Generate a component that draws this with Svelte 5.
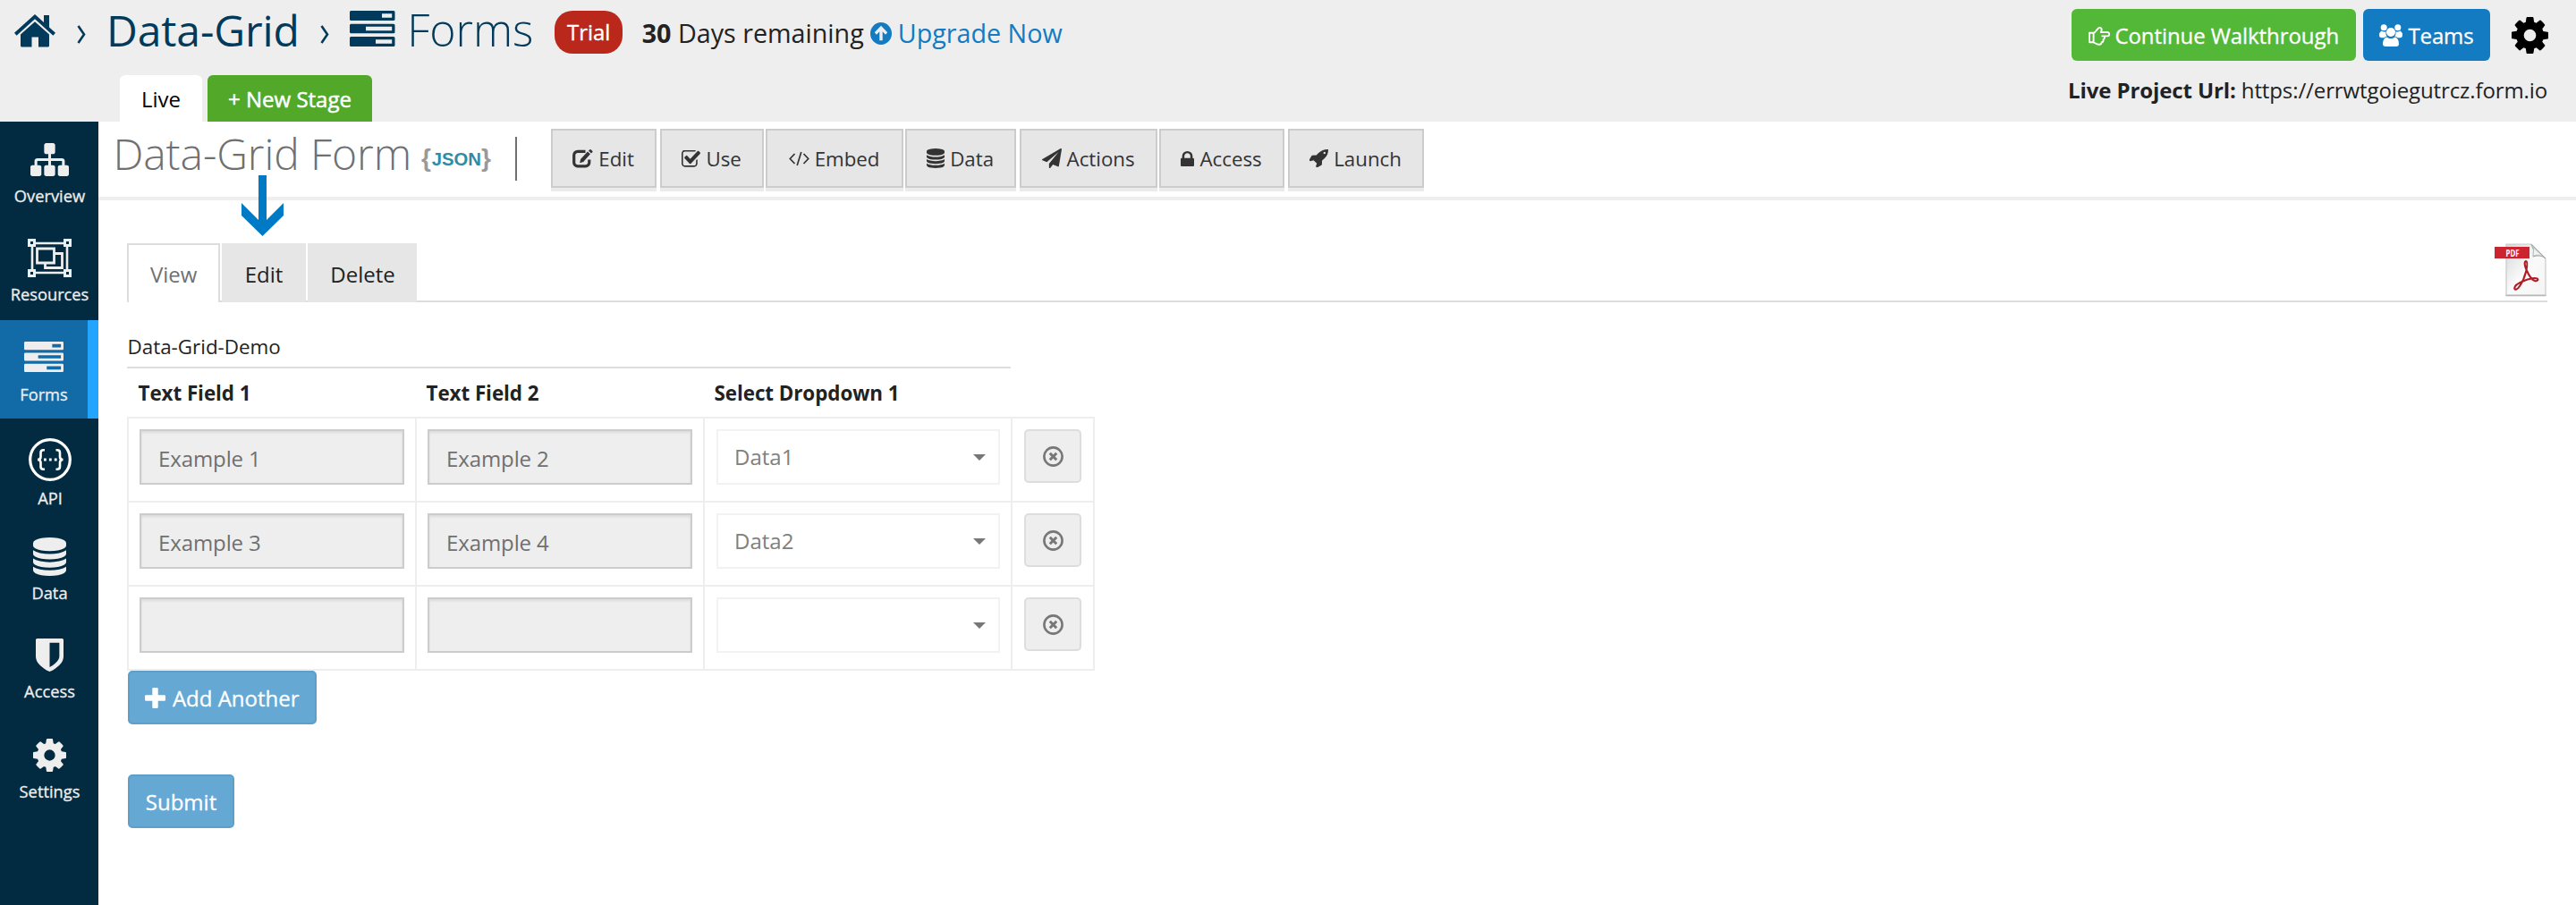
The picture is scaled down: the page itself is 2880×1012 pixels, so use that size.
<script>
  const nav = [
    { key: 'overview', label: 'Overview', icon: 'sitemap', w: 43, h: 37 },
    { key: 'resources', label: 'Resources', icon: 'group', w: 49, h: 43 },
    { key: 'forms', label: 'Forms', icon: 'forms', w: 44, h: 34, active: true },
    { key: 'api', label: 'API', icon: 'api', w: 48, h: 48 },
    { key: 'data', label: 'Data', icon: 'database', w: 37, h: 43 },
    { key: 'access', label: 'Access', icon: 'shield', w: 31, h: 37 },
    { key: 'settings', label: 'Settings', icon: 'cog', w: 37, h: 37 }
  ];

  const tools = [
    { key: 't118', label: 'Edit', icon: 'edit', w: 23, h: 21 },
    { key: 't116', label: 'Use', icon: 'check', w: 21, h: 19 },
    { key: 't154', label: 'Embed', icon: 'code', w: 23, h: 17 },
    { key: 't124', label: 'Data', icon: 'database', w: 20, h: 22 },
    { key: 't154', label: 'Actions', icon: 'plane', w: 22, h: 22 },
    { key: 't140', label: 'Access', icon: 'lock', w: 15, h: 17 },
    { key: 't152', label: 'Launch', icon: 'rocket', w: 21, h: 20 }
  ];
  const toolGap = ['g4', 'g0', 'g0', 'g4', 'g0', 'g4'];

  const rows = [
    { a: 'Example 1', b: 'Example 2', c: 'Data1' },
    { a: 'Example 3', b: 'Example 4', c: 'Data2' },
    { a: '', b: '', c: '' }
  ];
</script>

{#snippet icon(name, w, h)}
  {#if name === 'sitemap'}
    <svg width={w} height={h} viewBox="0 128 1792 1536" preserveAspectRatio="none"><path d="M1792 1248v320q0 40-28 68t-68 28h-320q-40 0-68-28t-28-68v-320q0-40 28-68t68-28h96v-192h-512v192h96q40 0 68 28t28 68v320q0 40-28 68t-68 28h-320q-40 0-68-28t-28-68v-320q0-40 28-68t68-28h96v-192h-512v192h96q40 0 68 28t28 68v320q0 40-28 68t-68 28h-320q-40 0-68-28t-28-68v-320q0-40 28-68t68-28h96v-192q0-52 38-90t90-38h512v-192h-96q-40 0-68-28t-28-68v-320q0-40 28-68t68-28h320q40 0 68 28t28 68v320q0 40-28 68t-68 28h-96v192h512q52 0 90 38t38 90v192h96q40 0 68 28t28 68z" /></svg>
  {:else if name === 'group'}
    <svg width={w} height={h} viewBox="0 0 49 43" class="line">
      <path d="M9 5H40M9 38H40M5 9V34M44 9V34" stroke-width="2.6" />
      <path d="M1.5 1.5h6v6h-6zM41.5 1.5h6v6h-6zM1.5 35.5h6v6h-6zM41.5 35.5h6v6h-6z" stroke-width="3" />
      <path d="M10.5 11h19v16h-19z" stroke-width="2.8" />
      <path d="M30 16.5h8.5V32.5H19.5V27.5" stroke-width="2.8" />
    </svg>
  {:else if name === 'forms'}
    <svg width={w} height={h} viewBox="0 0 50.5 40" preserveAspectRatio="none">
      <path fill-rule="evenodd" d="M1.5 0h47.5a1.5 1.5 0 0 1 1.5 1.5v8a1.5 1.5 0 0 1-1.5 1.5H1.5A1.5 1.5 0 0 1 0 9.5v-8A1.5 1.5 0 0 1 1.5 0zM36 3.2v4.5h11.2v-4.5zM1.5 14.7h47.5a1.5 1.5 0 0 1 1.5 1.5v7.5a1.5 1.5 0 0 1-1.5 1.5H1.5A1.5 1.5 0 0 1 0 23.7v-7.5a1.5 1.5 0 0 1 1.5-1.5zM18 17.8v4.4h29.2v-4.4zM1.5 29h47.5a1.5 1.5 0 0 1 1.5 1.5v8a1.5 1.5 0 0 1-1.5 1.5H1.5A1.5 1.5 0 0 1 0 38.5v-8A1.5 1.5 0 0 1 1.5 29zM29 32.3v4.4h18.2v-4.4z" />
    </svg>
  {:else if name === 'api'}
    <svg width={w} height={h} viewBox="0 0 48 48" class="line white">
      <circle cx="24" cy="24" r="22.3" stroke-width="3.2" />
      <path d="M18 13.2h-1.5c-2 0-3 1-3 3v4.5c0 2-1.3 3.3-3.5 3.3 2.2 0 3.5 1.3 3.5 3.3v4.5c0 2 1 3 3 3H18M30.5 13.2h1.5c2 0 3 1 3 3v4.5c0 2 1.3 3.3 3.5 3.3-2.2 0-3.5 1.3-3.5 3.3v4.5c0 2-1 3-3 3h-1.5" stroke-width="2.6" />
      <path d="M17 24h2.8M22.9 24h2.8M28.8 24h2.8" stroke-width="2.8" />
    </svg>
  {:else if name === 'database'}
    <svg width={w} height={h} viewBox="128 0 1536 1792" preserveAspectRatio="none"><path d="M896 768q237 0 443-43t325-127v170q0 69-103 128t-280 93.5-385 34.5-385-34.5-280-93.5-103-128v-170q119 84 325 127t443 43zm0 768q237 0 443-43t325-127v170q0 69-103 128t-280 93.5-385 34.5-385-34.5-280-93.5-103-128v-170q119 84 325 127t443 43zm0-384q237 0 443-43t325-127v170q0 69-103 128t-280 93.5-385 34.5-385-34.5-280-93.5-103-128v-170q119 84 325 127t443 43zm0-1152q208 0 385 34.5t280 93.5 103 128v128q0 69-103 128t-280 93.5-385 34.5-385-34.5-280-93.5-103-128v-128q0-69 103-128t280-93.5 385-34.5z" /></svg>
  {:else if name === 'shield'}
    <svg width={w} height={h} viewBox="256 128 1280 1536" preserveAspectRatio="none"><path d="M1344 960v-640h-448v1137q119-63 213-137 235-184 235-360zm192-768v768q0 86-33.5 170.5t-83 150-118 127.5-126.5 103-121 77.5-89.5 49.5-42.5 20q-12 6-26 6t-26-6q-16-7-42.5-20t-89.5-49.5-121-77.5-126.5-103-118-127.5-83-150-33.5-170.5v-768q0-26 19-45t45-19h1152q26 0 45 19t19 45z" /></svg>
  {:else if name === 'cog'}
    <svg width={w} height={h} viewBox="128 128 1536 1536" preserveAspectRatio="none"><path d="M1152 896q0-106-75-181t-181-75-181 75-75 181 75 181 181 75 181-75 75-181zm512-109v222q0 12-8 23t-20 13l-185 28q-19 54-39 91 35 50 107 138 10 12 10 25t-9 23q-27 37-99 108t-94 71q-12 0-26-9l-138-108q-44 23-91 38-16 136-29 186-7 28-36 28h-222q-14 0-24.5-8.5t-11.5-21.5l-28-184q-49-16-90-37l-141 107q-10 9-25 9-14 0-25-11-126-114-165-168-7-10-7-23 0-12 8-23 15-21 51-66.5t54-70.5q-27-50-41-99l-183-27q-13-2-21-12.5t-8-23.5v-222q0-12 8-23t19-13l186-28q14-46 39-92-40-57-107-138-10-12-10-24 0-10 9-23 26-36 98.5-107.5t94.5-71.5q13 0 26 10l138 107q44-23 91-38 16-136 29-186 7-28 36-28h222q14 0 24.5 8.5t11.5 21.5l28 184q49 16 90 37l142-107q9-9 24-9 13 0 25 10 129 119 165 170 7 8 7 22 0 12-8 23-15 21-51 66.5t-54 70.5q26 50 41 98l183 28q13 2 21 12.5t8 23.5z" /></svg>
  {:else if name === 'edit'}
    <svg width={w} height={h} viewBox="0 0 23 21">
      <path class="stroked" d="M14.500 2.300H6a4.200 4.200 0 0 0-4.300 4.200v8.200A4.200 4.200 0 0 0 6 18.900h8.500a4.200 4.200 0 0 0 4.300-4.200v-3.200" stroke-width="3.200" />
      <path d="M17 2.600l3 2.700-7.800 8.600-4 1.300.9-4.100zM18 1.600L19.400.2q.6-.4 1.200.1l1.800 1.600q.5.6 0 1.200L21 4.400z" />
    </svg>
  {:else if name === 'check'}
    <svg width={w} height={h} viewBox="64 256 1664 1408" preserveAspectRatio="none"><path d="M1472 930v318q0 119-84.5 203.5t-203.5 84.5h-832q-119 0-203.500-84.5t-84.500-203.5v-832q0-119 84.500-203.500t203.500-84.500h832q63 0 117 25 15 7 18 23 3 17-9 29l-49 49q-10 10-23 10-3 0-9-2-23-6-45-6h-832q-66 0-113 47t-47 113v832q0 66 47 113t113 47h832q66 0 113-47t47-113v-254q0-13 9-22l64-64q10-10 23-10 6 0 12 3 20 8 20 29zm231-489l-814 814q-24 24-57 24t-57-24l-430-430q-24-24-24-57t24-57l110-110q24-24 57-24t57 24l263 263 647-647q24-24 57-24t57 24l110 110q24 24 24 57t-24 57z" transform="translate(0 110)" /></svg>
  {:else if name === 'code'}
    <svg width={w} height={h} viewBox="0 0 23 17" class="line"><path d="M6.500 3L1.300 8.500l5.200 5.500M16.500 3l5.200 5.500-5.200 5.500M13.800 1L9.200 16" stroke-width="1.700" /></svg>
  {:else if name === 'plane'}
    <svg width={w} height={h} viewBox="0 0 1792 1792" preserveAspectRatio="none"><path d="M1764 11q33 24 27 64l-256 1536q-5 29-32 45-14 8-31 8-11 0-24-5l-453-185-242 295q-18 23-49 23-13 0-22-4-19-7-30.5-23.5t-11.5-36.5v-349l864-1059-1069 925-395-162q-37-14-40-55-2-40 32-59l1664-960q15-9 32-9 20 0 36 11z" /></svg>
  {:else if name === 'lock'}
    <svg width={w} height={h} viewBox="320 128 1152 1408" preserveAspectRatio="none"><path d="M640 768h512v-192q0-106-75-181t-181-75-181 75-75 181v192zm832 96v576q0 40-28 68t-68 28h-960q-40 0-68-28t-28-68v-576q0-40 28-68t68-28h32v-192q0-184 132-316t316-132 316 132 132 316v192h32q40 0 68 28t28 68z" /></svg>
  {:else if name === 'rocket'}
    <svg width={w} height={h} viewBox="64 128 1600 1600" preserveAspectRatio="none"><path d="M1440 448q0-40-28-68t-68-28-68 28-28 68 28 68 68 28 68-28 28-68zm224-288q0 249-75.5 430.5t-253.5 360.5q-81 80-195 176l-20 379q-2 16-16 26l-384 224q-7 4-16 4-12 0-23-9l-64-64q-13-14-8-32l85-276-281-281-276 85q-3 1-9 1-14 0-23-9l-64-64q-17-19-5-39l224-384q10-14 26-16l379-20q96-114 176-195 188-187 358-258t431-71q14 0 24 9.5t10 22.5z" /></svg>
  {/if}
{/snippet}

<div class="page">
  <header>
    <div class="left">
      <div class="crumbs">
        <svg class="home" width="46" height="37" viewBox="0 0 46 37">
          <path d="M23 0L33 9V1h6v13.500l7 6.300-2.600 3L23 5.200 2.600 23.800 0 20.800z" />
          <path d="M23 8.200L39 22.600V35q0 1.500-1.500 1.500H27V25.500h-7.500v11H8.500Q7 36.500 7 35V22.600z" />
        </svg>
        <svg class="chev c1" width="10" height="21" viewBox="0 0 10 21"><path d="M1.500 1l6.500 9.500L1.500 20" /></svg>
        <span class="proj">Data-Grid</span>
        <svg class="chev c2" width="10" height="21" viewBox="0 0 10 21"><path d="M1.500 1l6.500 9.500L1.500 20" /></svg>
        <span class="formico">{@render icon('forms', 50.5, 40)}</span>
        <span class="section">Forms</span>
        <span class="trial">Trial</span>
        <span class="remain"><b>30</b> Days remaining</span>
        <a class="upgrade" href="#upgrade">
          <svg width="24" height="25" viewBox="0 0 24 24" preserveAspectRatio="none"><path fill-rule="evenodd" d="M12 0a12 12 0 1 1 0 24a12 12 0 0 1 0-24zM12 3.600L4.800 10.800l2.200 2.300 3.300-3.200V19.500h3.400V9.900l3.300 3.200 2.200-2.300z" /></svg>
          <span>Upgrade Now</span>
        </a>
      </div>
      <div class="stages">
        <span class="stage live">Live</span>
        <span class="stage new">+ New Stage</span>
      </div>
    </div>
    <div class="right">
      <div class="acts">
        <button class="hbtn go">
          <svg class="line" width="24" height="21" viewBox="0 0 24 21" stroke-width="1.900" stroke-linejoin="round"><path d="M1 6.800h5C9 5.500 9.800 1 12.300 1c3.200 0 2.600 3 1.500 5H21a2.100 2.100 0 0 1 0 4.400h-3.500c.9 1.800.2 3.400-1 3.700.3 2-.4 3.200-1.800 3.200-.2 1.900-1.200 2.500-3.200 2.500-2.800 0-4.300-2-6-2.500H1zM5.600 7v10.300M14.500 10.400h3" /></svg>
          <span>Continue Walkthrough</span>
        </button>
        <button class="hbtn teams">
          <svg width="26" height="25" viewBox="0 0 26 25">
            <circle cx="5.200" cy="3.700" r="3.500" /><circle cx="20.800" cy="3.700" r="3.500" />
            <path d="M2.300 7.500q3 1.800 5.200.8-.6 3.200 1 5.600-2 0-3 1.300H2.500Q0 15.200 0 12.800 0 9 2.300 7.500zM23.700 7.500q-3 1.800-5.200.8.600 3.200-1 5.600 2 0 3 1.300h3q2.500 0 2.500-2.400 0-3.800-2.300-5.300z" />
            <circle cx="13" cy="9" r="5" /><path d="M8.300 14.500q4.700 3.400 9.400 0Q22 16 22 22q0 3-3.200 3H7.200Q4 25 4 22q0-6 4.300-7.500z" />
          </svg>
          <span>Teams</span>
        </button>
        <span class="gear">{@render icon('cog', 41, 41)}</span>
      </div>
      <div class="url"><b>Live Project Url:</b> https://errwtgoiegutrcz.form.io</div>
    </div>
  </header>

  <div class="body">
    <nav>
      {#each nav as n}
        <a href="#{n.key}" class="item {n.key}" class:active={n.active}>
          {@render icon(n.icon, n.w, n.h)}
          <span>{n.label}</span>
        </a>
      {/each}
    </nav>

    <main>
      <div class="titlebar">
        <h1>Data-Grid Form</h1>
        <span class="json"><i>{'{'}</i>JSON<i>{'}'}</i></span>
        <span class="bar"></span>
        <div class="tools">
          {#each tools as t, i}
            <button class="tool {t.key} {toolGap[i] ?? ''}">
              {@render icon(t.icon, t.w, t.h)}
              <span>{t.label}</span>
            </button>
          {/each}
        </div>
      </div>

      <svg class="arrow" width="47" height="68" viewBox="0 0 47 68"><path d="M19 0h9v50L47 31v14L23.500 68 0 45V31l19 19z" /></svg>

      <div class="content">
        <div class="tabs">
          <span class="tab on">View</span>
          <span class="tab">Edit</span>
          <span class="tab">Delete</span>
          <svg class="pdf" width="60" height="60" viewBox="0 0 60 60">
            <defs>
              <linearGradient id="paper" x1="0" y1="0" x2="1" y2="1"><stop offset="0" stop-color="#d4d6d6" /><stop offset=".5" stop-color="#fafafa" /><stop offset="1" stop-color="#f4f4f4" /></linearGradient>
            </defs>
            <path d="M14 1h28l16 16v41H14z" fill="url(#paper)" stroke="#c9cccc" stroke-width="1.200" />
            <path d="M13.500 58.500h45" stroke="#b4b6b6" stroke-width="1.400" />
            <path d="M42 1q4 6 2 14 8-3 14 2z" fill="#c3c6c7" stroke="#a6a9aa" />
            <path d="M45 6l-.5 7.500q5-1.500 9 .5z" fill="#f1f2f2" />
            <path d="M1 4h39v13H1z" fill="#cb2430" />
            <text x="21" y="14.500" text-anchor="middle" textLength="15" lengthAdjust="spacingAndGlyphs">PDF</text>
            <path class="swirl" d="M36 20c-2.500 1-1 6 .5 9.500 2.500 6 6.500 11.500 9.500 12.500 3 .8 4.500-1.500 2.500-2.500-3-1.500-9 .3-14 2.200C28.500 44 23 47.500 23.200 50.500c.3 2 3.300 1.500 5.800-2.500 3-4.500 6-11.500 7.300-17 1-4.500 1.800-10.500-.3-11z" />
          </svg>
        </div>

        <div class="legend">Data-Grid-Demo</div>
        <div class="grid">
          <div class="head"><b>Text Field 1</b><b>Text Field 2</b><b>Select Dropdown 1</b></div>
          {#each rows as r}
            <div class="row">
              <div class="cell"><div class="input">{r.a}</div></div>
              <div class="cell"><div class="input">{r.b}</div></div>
              <div class="cell pick"><div class="select"><span>{r.c}</span><i></i></div></div>
              <div class="cell last">
                <button class="remove" aria-label="Remove">
                  <svg width="23" height="23" viewBox="0 0 23 23"><circle cx="11.500" cy="11.500" r="10.100" /><path d="M7.800 7.800l7.400 7.400M15.200 7.800l-7.400 7.400" /></svg>
                </button>
              </div>
            </div>
          {/each}
        </div>
        <button class="blue add">
          <svg width="23" height="23" viewBox="0 0 23 23"><path d="M9.500 0h4q1.200 0 1.200 1.200v7.100h7.100q1.200 0 1.200 1.200v4q0 1.200-1.200 1.200h-7.100v7.100q0 1.200-1.200 1.200h-4q-1.200 0-1.200-1.200v-7.100H1.200Q0 14.700 0 13.500v-4Q0 8.300 1.200 8.300h7.100V1.200Q8.300 0 9.500 0z" /></svg>
          <span>Add Another</span>
        </button>
        <button class="blue submit">Submit</button>
      </div>
    </main>
  </div>
</div>

<style>
  :global(body) { margin: 0; background: #fff; }
  .page {
    width: 2880px; height: 1012px; overflow: hidden;
    display: flex; flex-direction: column;
    font-family: "Open Sans", "Noto Sans", sans-serif; font-size: 24px; color: #222;
  }
  svg { display: block; flex: none; fill: currentColor; }
  svg.line { fill: none; stroke: currentColor; }
  svg.white { color: #fff; }
  .stroked { fill: none; stroke: currentColor; }
  button { font: inherit; margin: 0; padding: 0; box-sizing: border-box; display: flex; align-items: center; }
  a { color: inherit; text-decoration: none; }
  span, b, h1 { white-space: nowrap; }

  header { height: 136px; flex: none; background: #eee; display: flex; justify-content: space-between; }
  .left { display: flex; flex-direction: column; }
  .crumbs { height: 72px; display: flex; align-items: center; padding-left: 16px; color: #023a5b; }
  .home { margin-bottom: 4px; }
  .chev { fill: none; stroke: #023a5b; stroke-width: 2.6; margin-top: 5px; }
  .c1 { margin-left: 24px; }
  .proj { font-size: 48px; line-height: 60px; margin: 0 0 5px 23px; letter-spacing: -.1px; }
  .c2 { margin-left: 23px; }
  .formico { margin: 0 0 8px 23.500px; }
  .section { font-size: 50px; font-weight: 300; line-height: 60px; margin: 0 0 6px 13.500px; letter-spacing: -.1px; }
  .trial {
    width: 76px; height: 48px; line-height: 47px; border-radius: 20px; margin-left: 24px;
    background: #b9281b; color: #fff; text-align: center; -webkit-text-stroke: .4px #fff;
  }
  .remain { font-size: 28.700px; margin: 1px 0 0 21.500px; color: #222; }
  .upgrade { display: flex; align-items: center; gap: 7px; margin-left: 7px; font-size: 28.700px; color: #127bc2; }
  .upgrade svg { margin-top: 3px; }
  .upgrade span { margin-top: 1px; }

  .stages { display: flex; gap: 6px; padding: 12px 0 0 134px; }
  .stage { height: 52px; line-height: 53px; text-align: center; border-radius: 6px 6px 0 0; }
  .live { width: 92px; background: #fff; color: #000; }
  .new { width: 184px; background: #52a829; color: #fff; -webkit-text-stroke: .5px #fff; }

  .right { display: flex; flex-direction: column; padding: 10px 31px 0 0; }
  .acts { display: flex; justify-content: flex-end; align-items: center; }
  .hbtn { height: 58px; border: 0; border-radius: 6px; color: #fff; justify-content: center; -webkit-text-stroke: .3px #fff; }
  .go { width: 318px; background: #53b837; gap: 5.500px; letter-spacing: -.08px; }
  .go svg { margin-top: 2px; }
  .teams { width: 142px; background: #127bc2; margin-left: 8px; gap: 6px; letter-spacing: -.1px; }
  .gear { margin-left: 24px; color: #000; }
  .url { text-align: right; line-height: 34px; margin-top: 16px; padding-right: 1px; letter-spacing: -.11px; }

  .body { flex: 1; display: flex; min-height: 0; }
  nav { width: 110px; flex: none; background: #022b41; color: #eee; display: flex; flex-direction: column; }
  .item {
    display: flex; flex-direction: column; align-items: center; justify-content: flex-end;
    gap: 10px; height: 110px; padding: 0 0 15px 1px; box-sizing: border-box; flex: none;
    font-size: 18.300px; line-height: 24px; -webkit-text-stroke: .3px #eee;
  }
  .resources { height: 112px; padding-bottom: 17px; gap: 7px; }
  .active { background: #126aa6; border-right: 12px solid #22a5ff; gap: 13px; padding-left: 0; }
  .api { height: 116px; gap: 7px; padding-left: 2px; }
  .data { height: 106px; gap: 7px; }
  .settings { height: 112px; }

  main { flex: 1; position: relative; }
  .titlebar { height: 84px; border-bottom: 4px solid #eee; display: flex; align-items: flex-start; padding-left: 16.500px; color: #707070; }
  h1 { margin: 0; font-size: 48px; font-weight: 300; line-height: 71px; letter-spacing: -.1px; }
  .json {
    display: flex; align-items: center; height: 30px; margin: 27px 0 0 11px;
    font: bold 20.300px "Liberation Sans", Arial, sans-serif; color: #2f8ba6;
  }
  .json i { font-style: normal; font-size: 28px; color: #999; width: 11.700px; line-height: 30px; margin-top: -3px; }
  .bar { width: 2px; height: 49px; background: #707070; margin: 17px 0 0 26px; }
  .tools { display: flex; padding: 8px 0 0 38px; }
  .tool {
    height: 66px; border: 2px solid #ccc; background: #e6e6e6; box-shadow: 0 4px 0 #ebebeb;
    color: #333; font-size: 22.300px; justify-content: center; gap: 6px; margin-right: 2px;
  }
  .tool.g4 { margin-right: 4px; }
  .t118 { width: 118px; } .t116 { width: 116px; } .t154 { width: 154px; }
  .t124 { width: 124px; } .t140 { width: 140px; } .t152 { width: 152px; }
  .arrow { position: absolute; left: 160px; top: 60px; color: #007ac4; }

  .content { padding: 48px 32px 0; }
  .tabs {
    height: 66px; box-sizing: border-box; display: flex; gap: 2px;
    box-shadow: inset 0 -2px 0 #ddd;
  }
  .tab { height: 66px; box-sizing: border-box; line-height: 63px; background: #e6e6e6; }
  .tab:nth-child(2) { padding-top: 3px; width: 94px; text-align: center; }
  .tab:nth-child(3) { padding: 3px 0 0 1px; width: 122px; text-align: center; }
  .tab.on { width: 104px; padding: 1px 24px 0; background: #fff; color: #707070; border: 2px solid #ddd; border-bottom: 0; }
  .pdf { margin-left: auto; }
  .pdf text { font: bold 11px "Open Sans", sans-serif; fill: #fff; }
  .swirl { fill: none; stroke: #b01c26; stroke-width: 2.1; }

  .legend { width: 988px; height: 49px; box-sizing: border-box; margin-top: 25px; border-bottom: 2px solid #ddd; font-size: 22.400px; line-height: 50px; padding-left: .5px; }
  .head, .row { display: grid; grid-template-columns: 322px 322px 344px 94px; }
  .head { height: 54px; line-height: 56px; font-size: 22.400px; }
  .head b { padding-left: 12.500px; letter-spacing: -.06px; }
  .cell { height: 94px; box-sizing: border-box; border: 2px solid #eee; border-width: 2px 0 0 2px; padding: 12px; }
  .pick { padding-left: 13px; }
  .last { width: 94px; border-right-width: 2px; padding-left: 13px; }
  .row:last-child .cell { height: 96px; border-bottom-width: 2px; }
  .grid { height: 338px; }
  .input, .select { height: 62px; box-sizing: border-box; border: 2px solid #ccc; padding: 0 19px; line-height: 60px; }
  .input { width: 296px; background: #eee; color: #707070; box-shadow: inset 0 2px 3px rgba(0, 0, 0, .08); line-height: 61px; letter-spacing: -.1px; }
  .select { width: 317px; border-color: #f2f2f2; background: #fff; color: #808080; display: flex; justify-content: space-between; align-items: center; padding: 0 14px 0 18px; line-height: 56px; }
  .select i { width: 0; height: 0; border: 7px solid transparent; border-top-color: #777; border-bottom: 0; margin-top: 1px; }
  .remove { width: 64px; height: 60px; border: 2px solid #ddd; border-radius: 5px; background: #eee; justify-content: center; }
  .remove svg { fill: none; stroke: #777; stroke-width: 2.6; }
  .remove path { stroke-width: 3; }

  .blue {
    height: 60px; margin-left: 1px; border: 2px solid #5e9fc9; border-radius: 5px; background: #65a8d4; color: #fff;
    justify-content: center; gap: 7.500px; -webkit-text-stroke: .3px #fff;
  }
  .add { width: 211px; }
  .submit { width: 119px; margin-top: 56px; }
</style>
